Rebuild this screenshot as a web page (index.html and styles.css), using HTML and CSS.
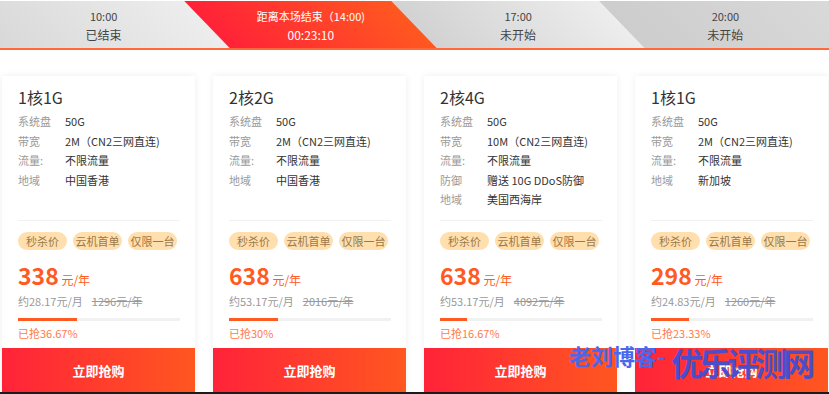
FILE: index.html
```html
<!DOCTYPE html>
<html lang="zh-CN">
<head>
  <meta charset="UTF-8">
  <meta name="viewport" content="width=device-width, initial-scale=1.0">
  <title>秒杀</title>
  <link rel="stylesheet" href="styles.css">
</head>
<body>
  <div class="tabs">
    <div class="tab tab-done"><span class="time">10:00</span><span class="state">已结束</span></div>
    <div class="tab tab-active"><span class="time">距离本场结束（14:00)</span><span class="state">00:23:10</span></div>
    <div class="tab tab-wait"><span class="time">17:00</span><span class="state">未开始</span></div>
    <div class="tab tab-last"><span class="time">20:00</span><span class="state">未开始</span></div>
  </div>

  <div class="cards">
    <div class="card">
      <div class="card-body">
        <h3>1核1G</h3>
        <ul class="specs">
          <li><span class="k">系统盘</span><span class="v">50G</span></li>
          <li><span class="k">带宽</span><span class="v">2M（CN2三网直连)</span></li>
          <li><span class="k">流量:</span><span class="v">不限流量</span></li>
          <li><span class="k">地域</span><span class="v">中国香港</span></li>
        </ul>
        <div class="tags"><span>秒杀价</span><span>云机首单</span><span>仅限一台</span></div>
        <div class="price"><b>338</b> 元/年</div>
        <div class="sub">约28.17元/月<s>1296元/年</s></div>
        <div class="bar"><i style="width:36.67%"></i></div>
        <div class="sold">已抢36.67%</div>
      </div>
      <button class="buy">立即抢购</button>
    </div>

    <div class="card">
      <div class="card-body">
        <h3>2核2G</h3>
        <ul class="specs">
          <li><span class="k">系统盘</span><span class="v">50G</span></li>
          <li><span class="k">带宽</span><span class="v">2M（CN2三网直连)</span></li>
          <li><span class="k">流量:</span><span class="v">不限流量</span></li>
          <li><span class="k">地域</span><span class="v">中国香港</span></li>
        </ul>
        <div class="tags"><span>秒杀价</span><span>云机首单</span><span>仅限一台</span></div>
        <div class="price"><b>638</b> 元/年</div>
        <div class="sub">约53.17元/月<s>2016元/年</s></div>
        <div class="bar"><i style="width:30%"></i></div>
        <div class="sold">已抢30%</div>
      </div>
      <button class="buy">立即抢购</button>
    </div>

    <div class="card">
      <div class="card-body">
        <h3>2核4G</h3>
        <ul class="specs">
          <li><span class="k">系统盘</span><span class="v">50G</span></li>
          <li><span class="k">带宽</span><span class="v">10M（CN2三网直连)</span></li>
          <li><span class="k">流量:</span><span class="v">不限流量</span></li>
          <li><span class="k">防御</span><span class="v">赠送 10G DDoS防御</span></li>
          <li><span class="k">地域</span><span class="v">美国西海岸</span></li>
        </ul>
        <div class="tags"><span>秒杀价</span><span>云机首单</span><span>仅限一台</span></div>
        <div class="price"><b>638</b> 元/年</div>
        <div class="sub">约53.17元/月<s>4092元/年</s></div>
        <div class="bar"><i style="width:16.67%"></i></div>
        <div class="sold">已抢16.67%</div>
      </div>
      <button class="buy">立即抢购</button>
    </div>

    <div class="card">
      <div class="card-body">
        <h3>1核1G</h3>
        <ul class="specs">
          <li><span class="k">系统盘</span><span class="v">50G</span></li>
          <li><span class="k">带宽</span><span class="v">2M（CN2三网直连)</span></li>
          <li><span class="k">流量:</span><span class="v">不限流量</span></li>
          <li><span class="k">地域</span><span class="v">新加坡</span></li>
        </ul>
        <div class="tags"><span>秒杀价</span><span>云机首单</span><span>仅限一台</span></div>
        <div class="price"><b>298</b> 元/年</div>
        <div class="sub">约24.83元/月<s>1260元/年</s></div>
        <div class="bar"><i style="width:23.33%"></i></div>
        <div class="sold">已抢23.33%</div>
      </div>
      <button class="buy">立即抢购</button>
    </div>
  </div>

  <div class="watermark"><span class="wm-small">老刘博客-</span><span class="wm-big">优乐评测网</span></div>
</body>
</html>
```

FILE: styles.css
```css
* { margin: 0; padding: 0; box-sizing: border-box; }
html, body { width: 100%; height: 100%; overflow: hidden; }
body { position: relative; background: #fff; font-family: "Noto Sans CJK SC", "Liberation Sans", sans-serif; color: #333; border-bottom: 2px solid #1a1a1a; }

/* top time tabs */
.tabs { display: flex; height: 49px; margin-top: 1px; border-bottom: 2px solid #ff6a3c; overflow: hidden; background: #d6d6d6; }
.tab { position: relative; flex: 1; display: flex; flex-direction: column; align-items: center; padding-top: 8px; color: #444; z-index: 0; }
.tab::before { content: ""; position: absolute; top: 0; bottom: 0; left: 0; right: 0; transform: skewX(44deg); z-index: -1; }
.tab-done::before { left: -80px; background: linear-gradient(90deg, #d3d3d3, #ededed); }
.tab-active { color: #fff; }
.tab-active::before { background: linear-gradient(90deg, #ff2238, #ff5820); }
.tab-wait::before { background: linear-gradient(90deg, #d2d2d2, #ededed); }
.tab-last::before { right: -80px; background: linear-gradient(90deg, #cdcdcd, #dcdcdc); }
.tab .time { font-size: 11px; line-height: 15px; }
.tab .state { font-size: 12px; line-height: 18px; margin-top: 2px; }

/* product cards */
.cards { display: flex; gap: 18px; padding: 26px 0 0 2px; }
.card { width: 193px; height: 316px; background: #fff; box-shadow: 0 0 7px rgba(0,0,0,0.07); display: flex; flex-direction: column; }
.card-body { flex: 1; padding: 11px 15px 0 16px; }
.card h3 { font-size: 16px; font-weight: normal; line-height: 20px; color: #333; }
.specs { list-style: none; height: 114px; border-bottom: 1px solid #f1f1f1; padding-top: 5px; }
.specs li { display: flex; font-size: 11px; line-height: 19.5px; }
.specs .k { width: 47px; color: #9a9a9a; }
.specs .v { color: #333; }
.tags { display: flex; gap: 6px; margin-top: 11px; }
.tags span { width: 49px; height: 18px; line-height: 18px; border-radius: 9px; background: #ffdfae; color: #9c7846; font-size: 11px; text-align: center; }
.price { margin-top: 12px; color: #ff5a22; font-size: 12px; line-height: 26px; }
.price b { font-size: 23px; font-weight: bold; }
.sub { font-size: 11px; line-height: 16px; color: #999; }
.sub s { margin-left: 9px; }
.bar { height: 3px; margin-top: 9px; background: #f1f1f1; }
.bar i { display: block; height: 100%; background: #ff5a22; }
.sold { margin-top: 4px; font-size: 11px; line-height: 16px; color: #ff7a4c; }
.buy { height: 44px; border: none; background: linear-gradient(90deg, #ff2339, #ff5720); color: #fff; font-family: inherit; font-size: 13px; font-weight: bold; cursor: pointer; }

/* watermark over the corner */
.watermark { position: absolute; left: 569px; top: 344px; display: flex; align-items: flex-start; }
.wm-small { font-size: 22px; font-weight: bold; line-height: 22px; color: #4a68ee; }
.wm-big { margin: 1px 0 0 6px; font-size: 32px; font-weight: bold; line-height: 34px; color: #4b4ecb; letter-spacing: -4px; }
```
